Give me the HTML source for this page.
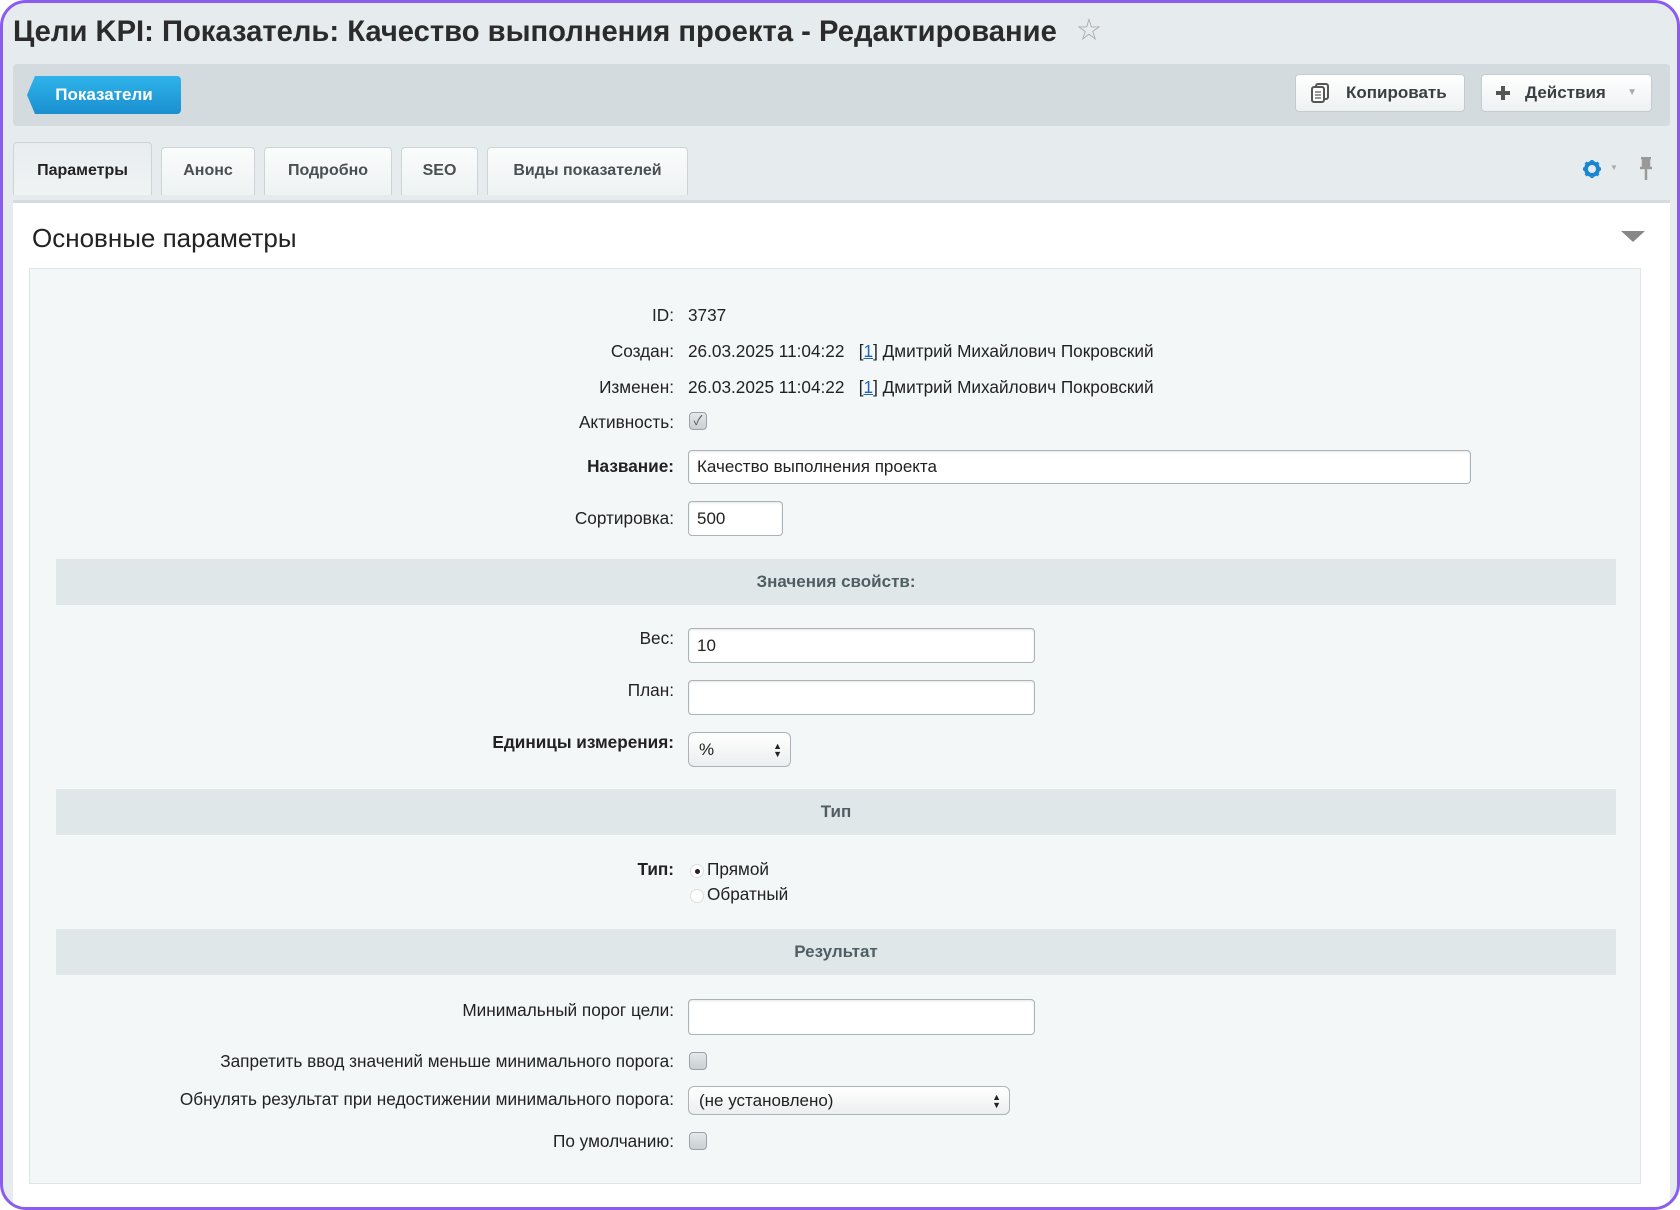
<!DOCTYPE html>
<html><head><meta charset="utf-8"><style>
*{box-sizing:border-box;margin:0;padding:0}
body{width:1680px;height:1210px;background:#fff;font-family:"Liberation Sans","Noto Sans CJK SC",sans-serif;color:#222;position:relative;overflow:hidden}
.frame{position:absolute;left:0;top:0;width:1680px;height:1210px;border:3px solid #8a5cf0;border-radius:26px;background:#e6ecee;overflow:hidden}
.abs{position:absolute}
.title{left:10px;top:7px;font-size:29.2px;font-weight:bold;color:#2b2b2b;white-space:nowrap}
.bar{left:10px;top:61px;width:1657px;height:62px;background:#d3dbde;border-radius:4px}
.back{left:24px;top:73px;width:154px;height:38px;background:linear-gradient(#2fb4ea,#1a8fd0);border-radius:4px;color:#fff;font-weight:bold;font-size:17px;text-align:center;line-height:38px;clip-path:polygon(8px 0,100% 0,100% 100%,8px 100%,0 50%)}
.btn{top:71px;height:38px;background:linear-gradient(#fff,#eef1f2);border:1px solid #c5ccd0;border-radius:4px;font-weight:bold;font-size:17px;color:#3a3f42;line-height:36px}
.tab{top:144px;height:48px;background:linear-gradient(#fbfcfc,#eef2f3);border:1px solid #ccd4d7;border-bottom:none;border-radius:4px 4px 0 0;font-weight:bold;font-size:16px;color:#4a4f52;text-align:center;line-height:46px}
.panel{left:10px;top:197px;width:1657px;height:1010px;background:#fff;border-top:3px solid #d4dbde}
.inner{left:26px;top:265px;width:1612px;height:916px;background:#f4f7f8;border:1px solid #dfe6e9}
.lbl{position:absolute;right:1003px;font-size:17.2px;color:#222;white-space:nowrap;text-align:right}
.val{position:absolute;left:685px;font-size:17.2px;white-space:nowrap}
.inp{position:absolute;left:685px;background:#fff;border:1px solid #aab3b7;border-radius:4px;font-size:17px;padding-left:8px;box-shadow:inset 0 1px 2px rgba(0,0,0,.1)}
.sec{position:absolute;left:53px;width:1560px;height:46px;background:#e0e7e9;text-align:center;font-weight:bold;color:#4f5e63;font-size:17px;line-height:46px}
.cb{position:absolute;left:686px;width:18px;height:18px;border:1px solid #9aa3a7;border-radius:4px;background:linear-gradient(#e4e8ea,#c9cfd2)}
.sel{position:absolute;left:685px;border:1px solid #aab3b7;border-radius:6px;background:linear-gradient(#fff,#eceeef);font-size:17px;padding-left:10px}
.arr{position:absolute;right:8px;top:50%;transform:translateY(-50%);font-size:9px;line-height:8px;color:#222}
</style></head><body>
<div class="frame">
<div class="abs title">Цели KPI: Показатель: Качество выполнения проекта - Редактирование <span style="color:#aaa;font-weight:normal;font-size:24px;margin-left:12px;vertical-align:3px">☆</span></div>
<div class="abs bar"></div>
<div class="abs back">Показатели</div>
<div class="abs btn" style="left:1292px;width:170px;padding-left:50px">
<svg class="abs" style="left:14px;top:8px" width="20" height="20" viewBox="0 0 20 20"><rect x="6" y="1" width="12" height="15" rx="2" fill="none" stroke="#555" stroke-width="2"/><rect x="2" y="4" width="12" height="15" rx="2" fill="#fff" stroke="#555" stroke-width="2"/><path d="M5 9h6M5 12h6M5 15h6" stroke="#777" stroke-width="1.5"/></svg>Копировать</div>
<div class="abs btn" style="left:1478px;width:171px;padding-left:43px">
<svg class="abs" style="left:13px;top:10px" width="16" height="16" viewBox="0 0 16 16"><path d="M8 1v14M1 8h14" stroke="#555" stroke-width="4"/></svg>Действия<span class="abs" style="right:14px;top:0;color:#aaa;font-size:10px">▼</span></div>
<div class="abs tab" style="left:10px;top:139px;width:139px;height:53px;line-height:56px;color:#222;background:linear-gradient(#e8edef,#f0f3f4)">Параметры</div>
<div class="abs tab" style="left:158px;width:94px">Анонс</div>
<div class="abs tab" style="left:261px;width:128px">Подробно</div>
<div class="abs tab" style="left:398px;width:77px">SEO</div>
<div class="abs tab" style="left:484px;width:201px">Виды показателей</div>
<svg class="abs" style="left:1579px;top:156px" width="20" height="20" viewBox="0 0 20 20"><circle cx="10" cy="10" r="6" fill="none" stroke="#1a86d0" stroke-width="4"/><path d="M10 1v4M10 15v4M1 10h4M15 10h4M3.6 3.6l3 3M13.4 13.4l3 3M3.6 16.4l3-3M13.4 6.6l3-3" stroke="#1a86d0" stroke-width="3"/></svg>
<span class="abs" style="left:1607px;top:160px;font-size:8px;color:#aaa">▼</span>
<svg class="abs" style="left:1635px;top:154px" width="16" height="24" viewBox="0 0 16 24"><path d="M3 1h10M5 1v9M11 1v9M2 11h12M8 11v12" stroke="#999" stroke-width="2.5"/><rect x="5" y="2" width="6" height="9" fill="#999"/></svg>
<div class="abs panel"></div>
<div class="abs" style="left:29px;top:220px;font-size:26px;color:#222">Основные параметры</div>
<div class="abs" style="left:1618px;top:228px;width:0;height:0;border-left:12px solid transparent;border-right:12px solid transparent;border-top:11px solid #888"></div>
<div class="abs inner"></div>

<div class="lbl" style="top:302px">ID:</div><div class="val" style="top:302px">3737</div>
<div class="lbl" style="top:338px">Создан:</div><div class="val" style="top:338px">26.03.2025 11:04:22 &nbsp; [<span style="color:#2066b8;text-decoration:underline">1</span>] Дмитрий Михайлович Покровский</div>
<div class="lbl" style="top:374px">Изменен:</div><div class="val" style="top:374px">26.03.2025 11:04:22 &nbsp; [<span style="color:#2066b8;text-decoration:underline">1</span>] Дмитрий Михайлович Покровский</div>
<div class="lbl" style="top:409px">Активность:</div>
<div class="cb" style="top:409px;font-size:13px;color:#555;line-height:16px;text-align:center">✓</div>
<div class="lbl" style="top:453px;font-weight:bold">Название:</div>
<div class="inp" style="top:447px;width:783px;height:34px;line-height:32px">Качество выполнения проекта</div>
<div class="lbl" style="top:505px">Сортировка:</div>
<div class="inp" style="top:498px;width:95px;height:35px;line-height:33px">500</div>

<div class="sec" style="top:556px">Значения свойств:</div>
<div class="lbl" style="top:625px">Вес:</div>
<div class="inp" style="top:625px;width:347px;height:35px;line-height:33px">10</div>
<div class="lbl" style="top:677px">План:</div>
<div class="inp" style="top:677px;width:347px;height:35px"></div>
<div class="lbl" style="top:729px;font-weight:bold">Единицы измерения:</div>
<div class="sel" style="top:729px;width:103px;height:35px;line-height:33px">%<span class="arr">▲<br>▼</span></div>

<div class="sec" style="top:786px">Тип</div>
<div class="lbl" style="top:856px;font-weight:bold">Тип:</div>
<div class="abs" style="left:687px;top:861px;width:14px;height:14px;border-radius:50%;background:#fff;border:1px solid #ddd"><div style="width:5px;height:5px;border-radius:50%;background:#222;margin:3.5px"></div></div>
<div class="val" style="top:856px;left:704px">Прямой</div>
<div class="abs" style="left:687px;top:886px;width:14px;height:14px;border-radius:50%;background:#fff;border:1px solid #ddd"></div>
<div class="val" style="top:881px;left:704px">Обратный</div>

<div class="sec" style="top:926px">Результат</div>
<div class="lbl" style="top:997px">Минимальный порог цели:</div>
<div class="inp" style="top:996px;width:347px;height:36px"></div>
<div class="lbl" style="top:1048px">Запретить ввод значений меньше минимального порога:</div>
<div class="cb" style="top:1049px"></div>
<div class="lbl" style="top:1086px">Обнулять результат при недостижении минимального порога:</div>
<div class="sel" style="top:1083px;width:322px;height:29px;line-height:27px">(не установлено)<span class="arr">▲<br>▼</span></div>
<div class="lbl" style="top:1128px">По умолчанию:</div>
<div class="cb" style="top:1129px"></div>
</div>
</body></html>
